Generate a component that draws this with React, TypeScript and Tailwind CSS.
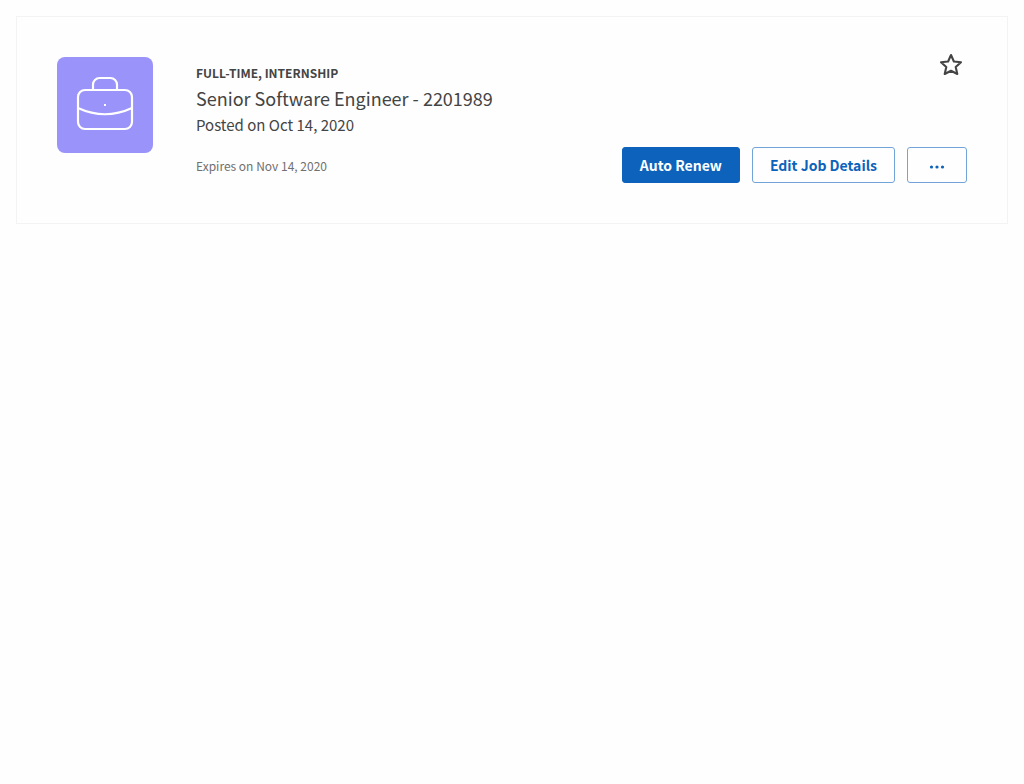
const buttonBase =
  'h-9 rounded-[3px] border px-[17px] text-sm leading-5 font-bold cursor-pointer';

function BriefcaseIcon() {
  return (
    <svg
      viewBox="0 0 96 96"
      className="size-24 shrink-0 rounded-lg bg-[#9a93fa]"
      fill="none"
      stroke="#fff"
      strokeWidth="2.200"
      aria-hidden="true"
    >
      <rect x="21" y="33" width="54" height="39" rx="7" />
      <path d="M36 33v-5.500a6.500 6.500 0 0 1 6.500-6.500h11a6.500 6.500 0 0 1 6.500 6.500v5.500" />
      <path d="M21 51q27 12.500 54 0" />
      <rect x="47" y="47" width="2" height="2" fill="#fff" stroke="none" />
    </svg>
  );
}

function StarIcon() {
  return (
    <svg viewBox="0 0 24 24" className="size-6" fill="none" stroke="#444" strokeWidth="2.100" strokeLinejoin="round" aria-hidden="true">
      <path d="M12 2l2.900 6.500 7.100.700-5.300 4.800 1.600 7L12 17.700l-6.300 3.300 1.600-7L2 9.200l7.100-.700z" />
    </svg>
  );
}

export default function App() {
  return (
    <main className="min-h-screen bg-[#fefefe] p-4 font-['Noto_Sans_CJK_JP',sans-serif] text-[#444]">
      <article className="flex border border-[#f3f3f3] p-10">
        <BriefcaseIcon />
        <div className="ml-[43px] flex grow flex-col">
          <div className="flex items-start justify-between">
            <div className="pt-2">
              <p className="text-xs leading-4 font-bold uppercase">Full-time, Internship</p>
              <h1 className="mt-1 text-lg leading-[26px]">Senior Software Engineer - 2201989</h1>
              <p className="text-[15px] leading-7">Posted on Oct 14, 2020</p>
            </div>
            <button type="button" aria-label="Save job" className="-mt-1 mr-1 cursor-pointer">
              <StarIcon />
            </button>
          </div>
          <div className="mt-2 flex items-center justify-between">
            <p className="pt-0.5 text-xs leading-4 text-[#707070]">Expires on Nov 14, 2020</p>
            <div className="flex gap-3">
              <button type="button" className={`${buttonBase} border-[#0d62bb] bg-[#0d62bb] text-white`}>
                Auto Renew
              </button>
              <button type="button" className={`${buttonBase} border-[#72a3d9] text-[#0d62bb]`}>
                Edit Job Details
              </button>
              <button type="button" aria-label="More actions" className={`${buttonBase} flex w-15 items-center justify-center border-[#72a3d9] pt-1 text-[#0d62bb]`}>
                <svg viewBox="0 0 16 4" className="h-1 w-4" fill="currentColor" aria-hidden="true">
                  <circle cx="2.500" cy="2" r="1.600" />
                  <circle cx="8" cy="2" r="1.600" />
                  <circle cx="13.500" cy="2" r="1.600" />
                </svg>
              </button>
            </div>
          </div>
        </div>
      </article>
    </main>
  );
}
